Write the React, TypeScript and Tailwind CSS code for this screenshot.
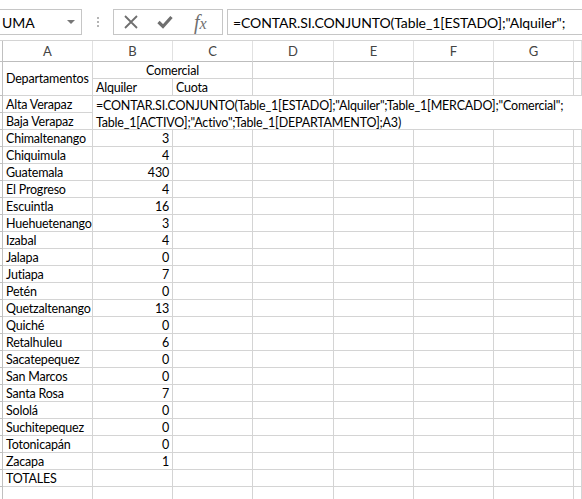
import React from 'react'

const rows: [string, string][] = [
  ['Chimaltenango', '3'],
  ['Chiquimula', '4'],
  ['Guatemala', '430'],
  ['El Progreso', '4'],
  ['Escuintla', '16'],
  ['Huehuetenango', '3'],
  ['Izabal', '4'],
  ['Jalapa', '0'],
  ['Jutiapa', '7'],
  ['Petén', '0'],
  ['Quetzaltenango', '13'],
  ['Quiché', '0'],
  ['Retalhuleu', '6'],
  ['Sacatepequez', '0'],
  ['San Marcos', '0'],
  ['Santa Rosa', '7'],
  ['Sololá', '0'],
  ['Suchitepequez', '0'],
  ['Totonicapán', '0'],
  ['Zacapa', '1'],
  ['TOTALES', ''],
  ['', ''],
]

const cell = 'border-r border-b border-[#d4d4d4] overflow-hidden whitespace-nowrap leading-[16px] pt-px'
const emptyCols = ['D', 'E', 'F', 'G', 'H']

export default function App() {
  return (
    <div className="w-[582px] h-[499px] overflow-hidden bg-white text-black font-['Lato',sans-serif] text-[12.5px] tracking-[-0.2px]">
      {/* Formula bar */}
      <div className="h-[40px] flex items-start pt-[9px] tracking-normal">
        <div className="w-[83px] h-[26px] -ml-px border border-[#c6c6c6] flex items-center justify-between pl-[2px] pr-[6px] text-[14px]">
          <span>UMA</span>
          <svg width="8" height="4" viewBox="0 0 8 4"><path d="M0 0h8L4 4z" fill="#777" /></svg>
        </div>
        <div className="w-[31px] h-[26px] flex flex-col items-center justify-center gap-[2px]">
          <span className="w-[2px] h-[2px] bg-[#b5b5b5]" />
          <span className="w-[2px] h-[2px] bg-[#b5b5b5]" />
          <span className="w-[2px] h-[2px] bg-[#b5b5b5]" />
        </div>
        <div className="w-[110px] h-[26px] border border-[#c6c6c6] flex items-center">
          <svg className="ml-[10px]" width="14" height="14" viewBox="0 0 14 14">
            <path d="M1 1L13 13M13 1L1 13" stroke="#6f6f6f" strokeWidth="1.8" />
          </svg>
          <svg className="ml-[19px]" width="16" height="14" viewBox="0 0 16 14">
            <path d="M1.5 7L6 11.5L14.5 2" stroke="#6f6f6f" strokeWidth="3.2" fill="none" />
          </svg>
          <span className="ml-[21px] font-['Liberation_Serif',serif] italic text-[20px] leading-none text-[#6f6f6f]">
            f<span className="text-[16px]">x</span>
          </span>
        </div>
        <div className="ml-[4px] flex-1 h-[26px] border border-[#c6c6c6] border-r-0 flex items-center pl-[5px] text-[14px] tracking-[-0.1px] whitespace-nowrap overflow-hidden">
          =CONTAR.SI.CONJUNTO(Table_1[ESTADO];"Alquiler";
        </div>
      </div>

      {/* Grid */}
      <div className="grid grid-cols-[3px_90px_80px_80px_81px_80px_80px_80px_1fr] grid-rows-[21px] auto-rows-[17px] border-t border-[#d4d4d4]">
        {/* column headers */}
        <div className="border-r border-b border-[#c0c0c0]" />
        {['A', 'B', 'C', 'D', 'E', 'F', 'G', ''].map((c, i) => (
          <div
            key={i}
            className="border-r border-b border-r-[#e1e1e1] border-b-[#bdbdbd] flex items-center justify-center pt-[2px] text-[#444] text-[13px] tracking-normal"
          >
            {c}
          </div>
        ))}

        {/* rows 1-2 header */}
        <div className="row-span-2 border-r border-b border-[#c0c0c0]" />
        <div className={`${cell} row-span-2 flex items-center pl-[3px]`}>Departamentos</div>
        <div className={`${cell} col-span-2 text-center`}>Comercial</div>
        {emptyCols.map(c => <div key={'r1' + c} className={cell} />)}
        <div className={`${cell} pl-[3px]`}>Alquiler</div>
        <div className={`${cell} pl-[3px]`}>Cuota</div>
        {emptyCols.map(c => <div key={'r2' + c} className={cell} />)}

        {/* rows 3-4 with cell in edit mode */}
        <div className="border-r border-b border-[#c0c0c0]" />
        <div className={`${cell} pl-[3px]`}>Alta Verapaz</div>
        <div className="col-span-7 row-span-2 border-b border-[#d4d4d4] bg-white pl-[3px] pt-px leading-[17px] whitespace-nowrap overflow-hidden">
          <div>=CONTAR.SI.CONJUNTO(Table_1[ESTADO];"Alquiler";Table_1[MERCADO];"Comercial";</div>
          <div>Table_1[ACTIVO];"Activo";Table_1[DEPARTAMENTO];A3)</div>
        </div>
        <div className="border-r border-b border-[#c0c0c0]" />
        <div className={`${cell} pl-[3px]`}>Baja Verapaz</div>

        {rows.map(([name, val], i) => (
          <React.Fragment key={i}>
            <div className="border-r border-b border-[#c0c0c0]" />
            <div className={`${cell} pl-[3px]`}>{name}</div>
            <div className={`${cell} text-right pr-[3px]`}>{val}</div>
            <div className={cell} />
            {emptyCols.map(c => <div key={c} className={cell} />)}
          </React.Fragment>
        ))}
      </div>
    </div>
  )
}
